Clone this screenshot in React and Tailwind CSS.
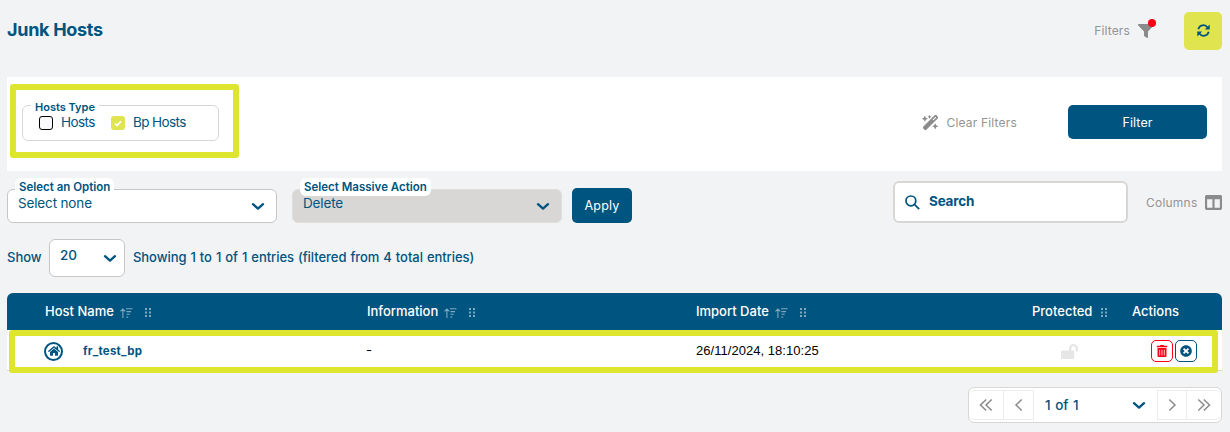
import React from "react";
import { FaColumns, FaHome, FaLockOpen, FaTimesCircle, FaTrashAlt } from "react-icons/fa";
import { FaWandMagicSparkles } from "react-icons/fa6";

const Chevron = ({ className = "" }) => (
  <svg className={`shrink-0 ${className}`} width="14" height="14" viewBox="0 0 14 14" fill="none">
    <path d="M2 5.2l5 4.4 5-4.4" stroke="#005480" strokeWidth="2.4" strokeLinecap="round" strokeLinejoin="round" />
  </svg>
);

const FunnelIcon = () => (
  <svg width="16" height="14" viewBox="0 0 16 14" fill="#8b8b8b">
    <path d="M1 0h14c.9 0 1.3 1 .7 1.6L10 7.6V13c0 .8-.8 1.2-1.4.8L6.4 12.2c-.3-.2-.4-.5-.4-.8V7.6L.3 1.6C-.3 1 .1 0 1 0z" />
  </svg>
);

const RefreshIcon = () => (
  <svg className="mb-0.5" width="13" height="13" viewBox="0 0 13 13" fill="none" stroke="#005480" strokeWidth="1.7">
    <path d="M1.3 5.3A5.2 5.2 0 0 1 10.6 3.4M11.7 7.7A5.2 5.2 0 0 1 2.4 9.6" />
    <path d="M12.7 .5v4.9H7.8zM.3 12.5V7.6h4.9z" fill="#005480" stroke="none" />
  </svg>
);

const SortIcon = () => (
  <svg width="13" height="10" viewBox="0 0 13 10" fill="none" stroke="#7fa9bf" strokeWidth="1.1">
    <path d="M2.9 10V1M.5 3.3L2.9 1l2.4 2.3M6 .8h6.5M6.5 3.6h4.5M6.5 6.3h3.2M6.5 9.1h1.7" />
  </svg>
);

const DragDots = () => (
  <svg width="6" height="9" viewBox="0 0 6 9" fill="#7fa9bf">
    <path d="M0 0h2v2H0zM4 0h2v2H4zM0 3.5h2v2H0zM4 3.5h2v2H4zM0 7h2v2H0zM4 7h2v2H4z" />
  </svg>
);

const PageArrow = ({ double, right, className = "" }) => (
  <div className={`flex h-[30px] items-center justify-center border-y border-[#ececec] ${className}`}>
    <svg
      className={right ? "rotate-180" : ""}
      width="14"
      height="14"
      viewBox="0 0 14 14"
      fill="none"
      stroke="#8b8b8b"
      strokeWidth="1.5"
    >
      {double ? <path d="M7.2 1.5L1.5 7l5.7 5.5M12.7 1.5L7 7l5.7 5.5" /> : <path d="M9.7 1.5L4 7l5.7 5.5" />}
    </svg>
  </div>
);

const Header = () => (
  <header className="flex h-[77px] items-start justify-between pt-3">
    <h1 className="mt-1 text-[18px] leading-7 font-bold tracking-[-0.3px]">Junk Hosts</h1>
    <div className="flex items-center">
      <span className="text-[12px] tracking-[0.15px] text-[#949494]">Filters</span>
      <div className="relative ml-2 mr-[30px]">
        <FunnelIcon />
        <span className="absolute -top-[5px] -right-0.5 size-2 rounded-full bg-[#ff0017]" />
      </div>
      <button className="flex size-[38px] items-center justify-center rounded-[5px] bg-[#e0e44f]">
        <RefreshIcon />
      </button>
    </div>
  </header>
);

const FilterPanel = () => (
  <section className="flex h-[94px] items-start justify-between bg-white pl-[3px] pr-[15px] pt-[7px]">
    <div className="h-[74px] w-[229px] rounded-[3px] border-6 border-[#dde52f] pl-1.5 pt-[15px]">
      <div className="relative flex h-9 w-[197px] items-center rounded-md border border-[#d8d7d6] pl-4 text-[13.5px]">
        <span className="absolute -top-[7px] left-2 bg-white px-1 text-[11px] leading-4 font-semibold">
          Hosts Type
        </span>
        <span className="size-3.5 rounded-[3px] border border-black bg-[#f9f9fb]" />
        <span className="mb-0.5 ml-2 w-[50px] tracking-[-0.6px]">Hosts</span>
        <span className="flex size-3.5 items-center justify-center rounded-[3px] bg-[#e0e44f]">
          <svg width="8" height="7" viewBox="0 0 8 7" fill="none">
            <path d="M1 3.5l2 2L7 1.3" stroke="white" strokeWidth="1.7" />
          </svg>
        </span>
        <span className="mb-0.5 ml-2 tracking-[-0.6px]">Bp Hosts</span>
      </div>
    </div>
    <div className="mt-[21px] flex items-center">
      <FaWandMagicSparkles size={17} className="text-[#8b8b8b]" />
      <span className="mt-0.5 ml-2 text-[12px] tracking-[0.18px] text-[#949494]">Clear Filters</span>
      <button className="ml-[51px] h-[34px] w-[139px] rounded-[5px] bg-[#005480] pt-0.5 text-[12.5px] tracking-[0.1px] text-white">
        Filter
      </button>
    </div>
  </section>
);

const FloatingSelect = ({ label, value, disabled }) => (
  <div
    className={`relative flex h-[34px] w-[270px] justify-between rounded-md border pl-2.5 pr-[11px] ${
      disabled ? "border-[#dfdedd] bg-[#d8d7d6]" : "border-[#c6c6c6] bg-white"
    }`}
  >
    <span className="absolute -top-3 left-[7px] rounded-md bg-white px-1 text-[11.5px] leading-[18px] font-semibold whitespace-nowrap">
      {label}
    </span>
    <span className="mt-[3px] text-[13.5px] leading-5 tracking-[-0.15px]">{value}</span>
    <Chevron className="mt-[9px]" />
  </div>
);

const Toolbar = () => (
  <section className="flex h-[52px] items-end pt-2.5">
    <FloatingSelect label="Select an Option" value="Select none" />
    <div className="ml-[15px]">
      <FloatingSelect label="Select Massive Action" value="Delete" disabled />
    </div>
    <button className="ml-2.5 h-[35px] w-[60px] rounded-[5px] bg-[#005480] pt-0.5 text-[12.5px] tracking-[0.2px] text-white">
      Apply
    </button>
    <div className="ml-auto flex h-[42px] w-[235px] items-center rounded-md border-2 border-[#d8d7d6] bg-white pl-2.5">
      <svg width="15" height="15" viewBox="0 0 15 15" fill="none" stroke="#005480" strokeWidth="1.7">
        <path d="M10.8 5.9a4.9 4.9 0 1 1-9.8 0a4.900 4.9 0 0 1 9.8 0zM9.4 9.4l4.8 4.8" />
      </svg>
      <span className="mb-0.5 ml-[9px] text-[13.5px] font-bold tracking-[-0.2px]">Search</span>
    </div>
    <div className="ml-[18px] flex h-[42px] items-center">
      <span className="mt-0.5 w-[59px] text-[12px] tracking-[0.22px] text-[#949494]">Columns</span>
      <FaColumns size={17} className="text-[#8b8b8b]" />
    </div>
  </section>
);

const EntriesRow = () => (
  <section className="mt-4 flex h-[38px] items-center text-[13px] font-medium">
    <span className="w-[42px]">Show</span>
    <div className="flex h-[38px] w-[76px] justify-between rounded-md border border-[#c6c6c6] bg-white pl-2.5 pr-[7px]">
      <span className="mt-[5px] text-[13.5px] leading-5">20</span>
      <Chevron className="mt-[11px]" />
    </div>
    <span className="ml-2 tracking-[-0.05px] [word-spacing:0.6px]">
      Showing 1 to 1 of 1 entries (filtered from 4 total entries)
    </span>
  </section>
);

const HeadCell = ({ children, sortable, draggable }) => (
  <div className="flex items-center">
    <span>{children}</span>
    {sortable && (
      <span className="mt-0.5 ml-1.5">
        <SortIcon />
      </span>
    )}
    {draggable && (
      <span className={sortable ? "mt-0.5 ml-3" : "mt-0.5 ml-[9px]"}>
        <DragDots />
      </span>
    )}
  </div>
);

const HostsTable = () => (
  <section className="mt-4">
    <div className="grid h-[37px] grid-cols-[322px_329px_336px_100px_1fr] rounded-t-md bg-[#005480] pl-[38px] text-[13px] font-medium text-white">
      <HeadCell sortable draggable>Host Name</HeadCell>
      <HeadCell sortable draggable>Information</HeadCell>
      <HeadCell sortable draggable>Import Date</HeadCell>
      <HeadCell draggable>Protected</HeadCell>
      <HeadCell>Actions</HeadCell>
    </div>
    <div className="h-[41px] border-b border-[#d8d7d6] bg-white pl-0.5 pr-1">
      <div className="grid h-[43px] grid-cols-[322px_330px_364px_91px_1fr] items-center rounded-[3px] border-6 border-[#dde52f] bg-white pb-px pl-[29px]">
        <div className="flex items-center">
          <span className="flex size-[19px] items-center justify-center rounded-full border-2 border-[#005480]">
            <FaHome size={12} className="shrink-0" />
          </span>
          <span className="mt-0.5 ml-5 text-[11.5px] font-bold tracking-[0.25px]">fr_test_bp</span>
        </div>
        <span className="text-[13px] text-black">-</span>
        <span className="font-['Liberation_Sans',sans-serif] text-[13px] tracking-[0.04px] text-black">
          26/11/2024, 18:10:25
        </span>
        <FaLockOpen size={17} className="ml-px text-[#e6e6e6]" />
        <div className="flex gap-0.5">
          <button className="flex size-[22px] items-center justify-center rounded-[5px] border border-[#ff0017] text-[#ff0017]">
            <FaTrashAlt size={12} />
          </button>
          <button className="flex size-[22px] items-center justify-center rounded-[5px] border border-[#005480]">
            <FaTimesCircle size={12} />
          </button>
        </div>
      </div>
    </div>
  </section>
);

const Pagination = () => (
  <footer className="mt-4 flex justify-end">
    <div className="flex h-9 w-[254px] items-center rounded-md border border-[#d8d7d6] bg-white">
      <PageArrow double className="w-[35px] rounded-l-md border-r" />
      <PageArrow className="w-[30px] border-r" />
      <span className="ml-[11px] text-[13.5px] font-medium [word-spacing:1px]">1 of 1</span>
      <Chevron className="mr-[11px] ml-auto" />
      <PageArrow right className="w-[30px] border-x" />
      <PageArrow double right className="w-[34px] rounded-r-md" />
    </div>
  </footer>
);

const App = () => {
  return (
    <div className="h-[432px] w-[1230px] overflow-hidden bg-[#f2f3f5] pr-2 pl-[7px] font-[Inter,sans-serif] text-[#005480]">
      <Header />
      <FilterPanel />
      <Toolbar />
      <EntriesRow />
      <HostsTable />
      <Pagination />
    </div>
  );
};

export default App;
